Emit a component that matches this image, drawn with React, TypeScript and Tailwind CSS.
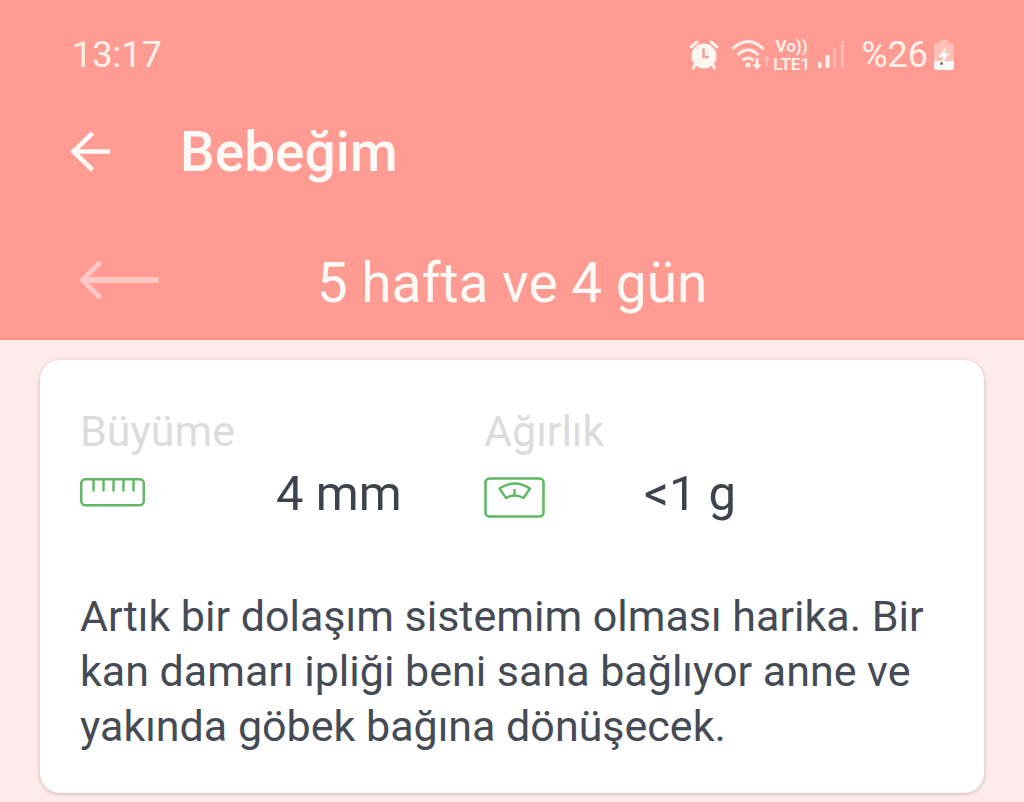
import React from "react";

function AlarmIcon() {
  return (
    <svg viewBox="0 0 30 30" className="h-[30px] w-[30px]" role="img" aria-label="Alarm">
      <circle cx="15" cy="16" r="12.500" fill="#fff6f1" />
      <path d="M2 7 L8 2 M28 7 L22 2 M6 25 L4.500 28 M24 25 L25.500 28" stroke="#fff0ea" strokeWidth="3" strokeLinecap="round" />
      <path d="M14.500 8.500 V17 H20" fill="none" stroke="#f0a39c" strokeWidth="2.600" />
    </svg>
  );
}

function WifiIcon() {
  return (
    <svg viewBox="0 0 38 32" className="h-8 w-[38px]" fill="none" stroke="#fff0ea" role="img" aria-label="Wi-Fi">
      <path d="M1.500 10 Q17 -5 32.500 10" strokeWidth="3" />
      <path d="M6.500 16 Q17 6 27.500 16" strokeWidth="3" />
      <path d="M11.500 21.500 Q17 16.500 22.500 21.500" strokeWidth="3" />
      <circle cx="17" cy="26" r="2.500" fill="#fff0ea" stroke="none" />
      <path d="M26 19 V29" strokeWidth="2.800" />
      <path d="M21.500 25.500 H30.500 L26 30.500 Z" fill="#fff0ea" stroke="none" />
      <path d="M35.500 27 V18 M33 20.500 L35.500 18 L38 20.500" strokeWidth="2" opacity=".35" />
    </svg>
  );
}

function SignalIcon() {
  return (
    <svg viewBox="0 0 27 28" className="h-7 w-[27px]" fill="#fff0ea" role="img" aria-label="Sinyal">
      <rect x="0" y="21" width="3.500" height="6" rx="1" />
      <rect x="7.500" y="14" width="4" height="13" rx="1" />
      <rect x="15.500" y="7" width="2.500" height="20" rx="1" opacity=".4" />
      <rect x="23" y="0" width="3" height="27" rx="1" opacity=".4" />
    </svg>
  );
}

function BatteryIcon() {
  return (
    <svg viewBox="0 0 20 30" className="h-[30px] w-5" role="img" aria-label="Şarj oluyor">
      <path d="M6 0 H14 V3 H17 Q20 3 20 6 V22 H0 V6 Q0 3 3 3 H6 Z" fill="#ffc0b9" />
      <path d="M0 21 H20 V27 Q20 30 17 30 H3 Q0 30 0 27 Z" fill="#fff8f4" />
      <path d="M12 7 L4.500 17 H9 L7.500 24 L15.500 13.500 H11 Z" fill="#fff8f4" />
      <circle cx="7.500" cy="23.500" r="1.500" fill="#806a66" />
    </svg>
  );
}

function RulerIcon() {
  return (
    <svg viewBox="0 0 66 30" className="h-[30px] w-[66px]" fill="none" stroke="#61b866" aria-hidden="true">
      <rect x="1.250" y="2.250" width="62.500" height="26" rx="4" strokeWidth="2.500" />
      <path d="M13.500 3 V14.500 M23.500 3 V14.500 M33.500 3 V14.500 M43.500 3 V14.500 M53.500 3 V14.500" strokeWidth="2.400" />
    </svg>
  );
}

function ScaleIcon() {
  return (
    <svg viewBox="0 0 62 42" className="h-[42px] w-[62px]" fill="none" stroke="#61b866" strokeLinejoin="round" aria-hidden="true">
      <rect x="1.500" y="1.500" width="58" height="38" rx="4" strokeWidth="2.600" />
      <path d="M15.500 11.500 Q30.500 1.500 46 11.500 L39.500 21 Q30.500 16 22 21 Z" strokeWidth="2.400" />
      <path d="M30.500 12 V18.500" strokeWidth="2.400" />
    </svg>
  );
}

function BackIcon() {
  return (
    <svg viewBox="0 0 42 40" className="h-10 w-[42px]" fill="none" stroke="#fffaf5" strokeWidth="4.600" aria-hidden="true">
      <path d="M22.500 1 L3.500 19.500 L22.500 38 M4 19.500 H40" />
    </svg>
  );
}

function PreviousIcon() {
  return (
    <svg viewBox="0 0 82 40" className="h-10 w-[82px]" fill="none" stroke="#ffc8c2" strokeLinecap="round" strokeLinejoin="round" aria-hidden="true">
      <path d="M21 3.500 L4.500 20 L21 36.500" strokeWidth="5" />
      <path d="M6 20 H78" strokeWidth="6" />
    </svg>
  );
}

interface MeasureProps {
  label: string;
  value: string;
  icon: React.ReactNode;
  gapClass: string;
}

function Measure({ label, value, icon, gapClass }: MeasureProps) {
  return (
    <div>
      <dt className="text-[43px] leading-[60px] text-[#dcdcde]">{label}</dt>
      <dd className={gapClass}>
        <div className="pt-4">{icon}</div>
        <span className="text-[49px] leading-[66px] text-[#3d434c]">{value}</span>
      </dd>
    </div>
  );
}

export default function App() {
  return (
    <div className="min-h-screen bg-[#feeceb] pb-2 font-['Roboto','Noto_Sans',sans-serif]">
      <header className="border-b-2 border-[#f7958f] bg-[#ff9b93] text-[#fffaf5]">
        <div className="flex h-[110px] items-center justify-between pr-[70px] pl-[72px] text-4xl text-[#fff0ea]">
          <time>13:17</time>
          <div className="flex items-center">
            <AlarmIcon />
            <div className="ml-3">
              <WifiIcon />
            </div>
            <div className="ml-1 flex flex-col items-center text-[17px] leading-[18px] font-semibold">
              <span>Vo))</span>
              <span>LTE1</span>
            </div>
            <div className="ml-2">
              <SignalIcon />
            </div>
            <span className="ml-4">%26</span>
            <div className="ml-1.5">
              <BatteryIcon />
            </div>
          </div>
        </div>
        <div className="flex h-[84px] items-center gap-[68px] px-[70px]">
          <button type="button" aria-label="Geri">
            <BackIcon />
          </button>
          <h1 className="text-[55px] leading-[64px] font-medium">Bebeğim</h1>
        </div>
        <div className="grid h-[144px] grid-cols-[1fr_auto_1fr] items-center px-[78px] pt-7">
          <button type="button" aria-label="Önceki gün" className="justify-self-start">
            <PreviousIcon />
          </button>
          <h2 className="pt-1.5 text-[55px] leading-[64px]">5 hafta ve 4 gün</h2>
        </div>
      </header>
      <main className="px-10 pt-5">
        <section className="rounded-[20px] bg-white px-10 pt-[41px] pb-[39px] shadow-[0_1px_4px_rgba(90,50,50,0.3)]">
          <dl className="grid grid-cols-[404fr_460fr]">
            <Measure
              label="Büyüme"
              value="4 mm"
              icon={<RulerIcon />}
              gapClass="flex h-[68px] items-start gap-[130px]"
            />
            <Measure
              label="Ağırlık"
              value="<1 g"
              icon={<ScaleIcon />}
              gapClass="flex h-[68px] items-start gap-[98px]"
            />
          </dl>
          <p className="mt-[60px] text-[43px] leading-[55px] text-[#454b54]">
            Artık bir dolaşım sistemim olması harika. Bir kan damarı ipliği beni sana bağlıyor anne ve yakında göbek bağına dönüşecek.
          </p>
        </section>
      </main>
    </div>
  );
}
